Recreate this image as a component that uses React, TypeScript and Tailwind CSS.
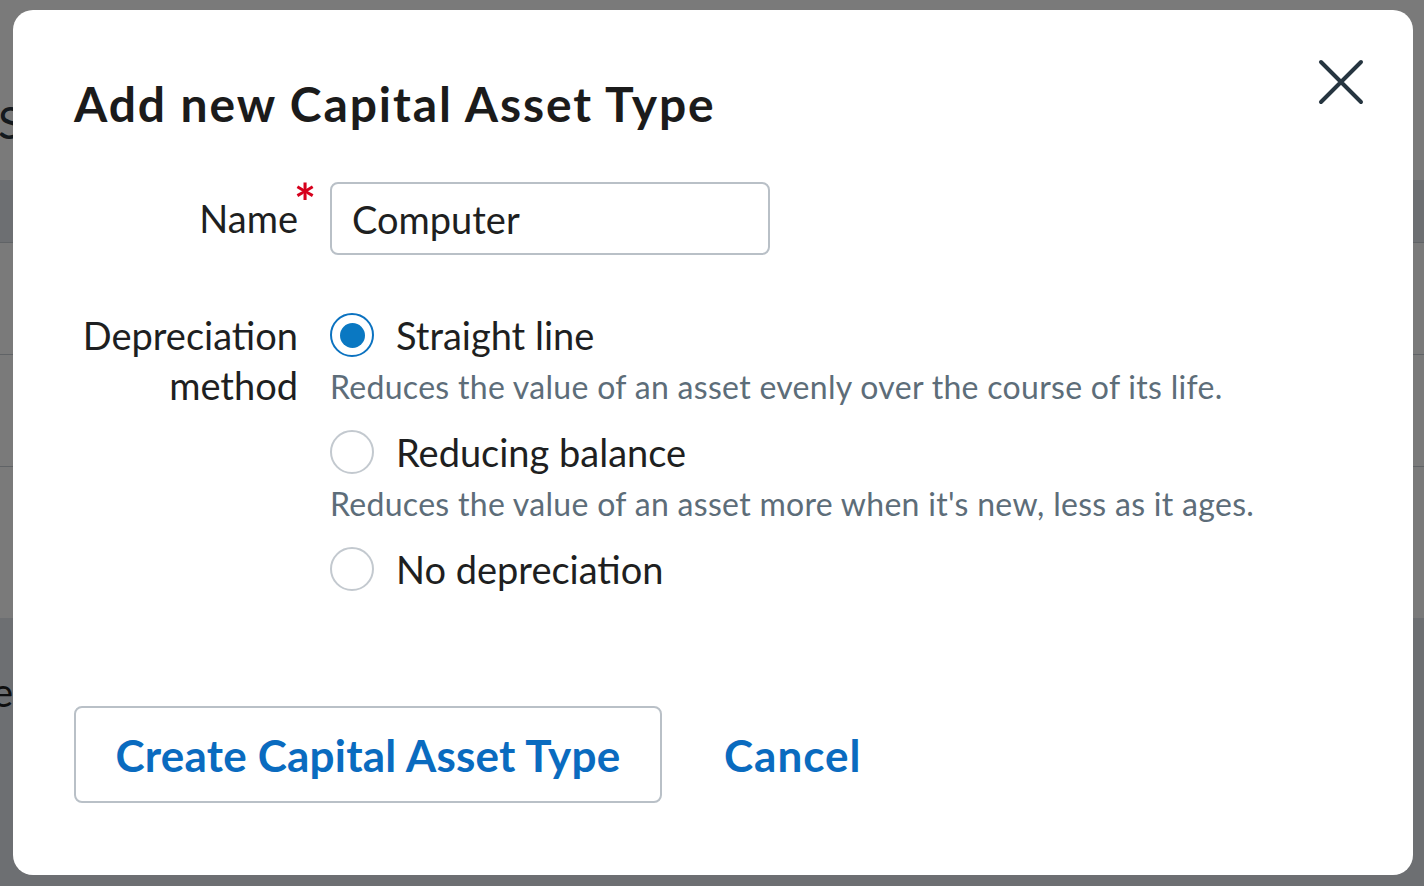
import { useState } from "react";

const font = { fontFamily: "Lato, 'Open Sans', sans-serif" };

const options = [
  {
    id: "straight",
    label: "Straight line",
    hint: "Reduces the value of an asset evenly over the course of its life.",
  },
  {
    id: "reducing",
    label: "Reducing balance",
    hint: "Reduces the value of an asset more when it's new, less as it ages.",
  },
  { id: "none", label: "No depreciation", hint: "" },
];

const Radio = ({ checked }: { checked: boolean }) => (
  <span
    className={`flex h-[44px] w-[44px] shrink-0 items-center justify-center rounded-full border-2 bg-white ${
      checked ? "border-[#0b72c0]" : "border-[#c3c9cf]"
    }`}
  >
    {checked && <span className="h-[25px] w-[25px] rounded-full bg-[#0a78c2]" />}
  </span>
);

const App = () => {
  const [method, setMethod] = useState("straight");
  const [name, setName] = useState("Computer");

  return (
    <div className="relative h-[886px] w-[1424px] overflow-hidden bg-white" style={font}>
      {/* page behind the modal */}
      <div className="flex flex-col">
        <div className="h-[180px] pt-[100px] text-[44px] leading-[44px] text-[#2a3640]">
          <span className="-ml-[2px]">S</span>
        </div>
        <div className="h-[63px] border-b border-[#c9cfd6] bg-[#e3e8ee]" />
        <div className="h-[112px] border-b border-[#c9cfd6]" />
        <div className="h-[112px] border-b border-[#c9cfd6]" />
        <div className="h-[151px]" />
        <div className="h-[268px] bg-[#e3e8ee] pt-[52px] text-[40px] leading-[44px] text-[#1e1f21]">
          <span className="-ml-[8px]">e</span>
        </div>
      </div>

      {/* overlay */}
      <div className="absolute inset-0 bg-black/[0.52] pt-[10px] pl-[13px]">
        <div className="relative h-[865px] w-[1400px] rounded-[20px] bg-white pt-[65px] pl-[61px]">
          <button className="absolute top-[48px] right-[48px] h-[48px] w-[48px]">
            <svg viewBox="0 0 48 48" className="h-[48px] w-[48px]">
              <path
                d="M4 4L44 44M44 4L4 44"
                stroke="#263540"
                strokeWidth="4"
                strokeLinecap="round"
              />
            </svg>
          </button>

          <h2 className="text-[48px] leading-[58px] font-bold tracking-[1.9px] text-[#1b1b1b]">
            Add new Capital Asset Type
          </h2>

          {/* Name row */}
          <div className="mt-[49px] flex items-center gap-[32px]">
            <label className="relative w-[224px] text-right text-[38px] text-[#1e1f21]">
              Name
              <span className="absolute top-[-14px] left-full -ml-[4px] text-[52px] leading-none font-bold text-[#d6001c]">
                *
              </span>
            </label>
            <input
              value={name}
              onChange={(e) => setName(e.target.value)}
              className="h-[73px] w-[440px] rounded-[8px] border-2 border-[#b9c0c7] px-[20px] text-[38px] text-[#1e1f21] outline-none"
            />
          </div>

          {/* Depreciation method */}
          <div className="mt-[58px] flex gap-[32px]">
            <div className="-mt-[3px] w-[224px] text-right text-[38px] leading-[50px] text-[#1e1f21]">
              Depreciation
              <br />
              method
            </div>
            <div className="flex flex-col gap-[21px]">
              {options.map((o) => (
                <div key={o.id}>
                  <button
                    onClick={() => setMethod(o.id)}
                    className="flex h-[44px] items-center gap-[22px] text-left"
                  >
                    <Radio checked={method === o.id} />
                    <span className="text-[38px] leading-[44px] text-[#1e1f21]">{o.label}</span>
                  </button>
                  {o.hint && (
                    <p className="mt-[8px] text-[32px] leading-[44px] tracking-[0.3px] text-[#5d6d79]">
                      {o.hint}
                    </p>
                  )}
                </div>
              ))}
            </div>
          </div>

          {/* Actions */}
          <div className="mt-[115px] flex items-center gap-[65px]">
            <button className="flex h-[97px] w-[588px] items-center justify-center rounded-[8px] border-2 border-[#b9c0c7] text-[44px] font-bold tracking-[0.2px] text-[#0a6bbf]">
              Create Capital Asset Type
            </button>
            <button className="-ml-[3px] text-[44px] font-bold tracking-[1px] text-[#0a6bbf]">
              Cancel
            </button>
          </div>
        </div>
      </div>
    </div>
  );
};

export default App;
